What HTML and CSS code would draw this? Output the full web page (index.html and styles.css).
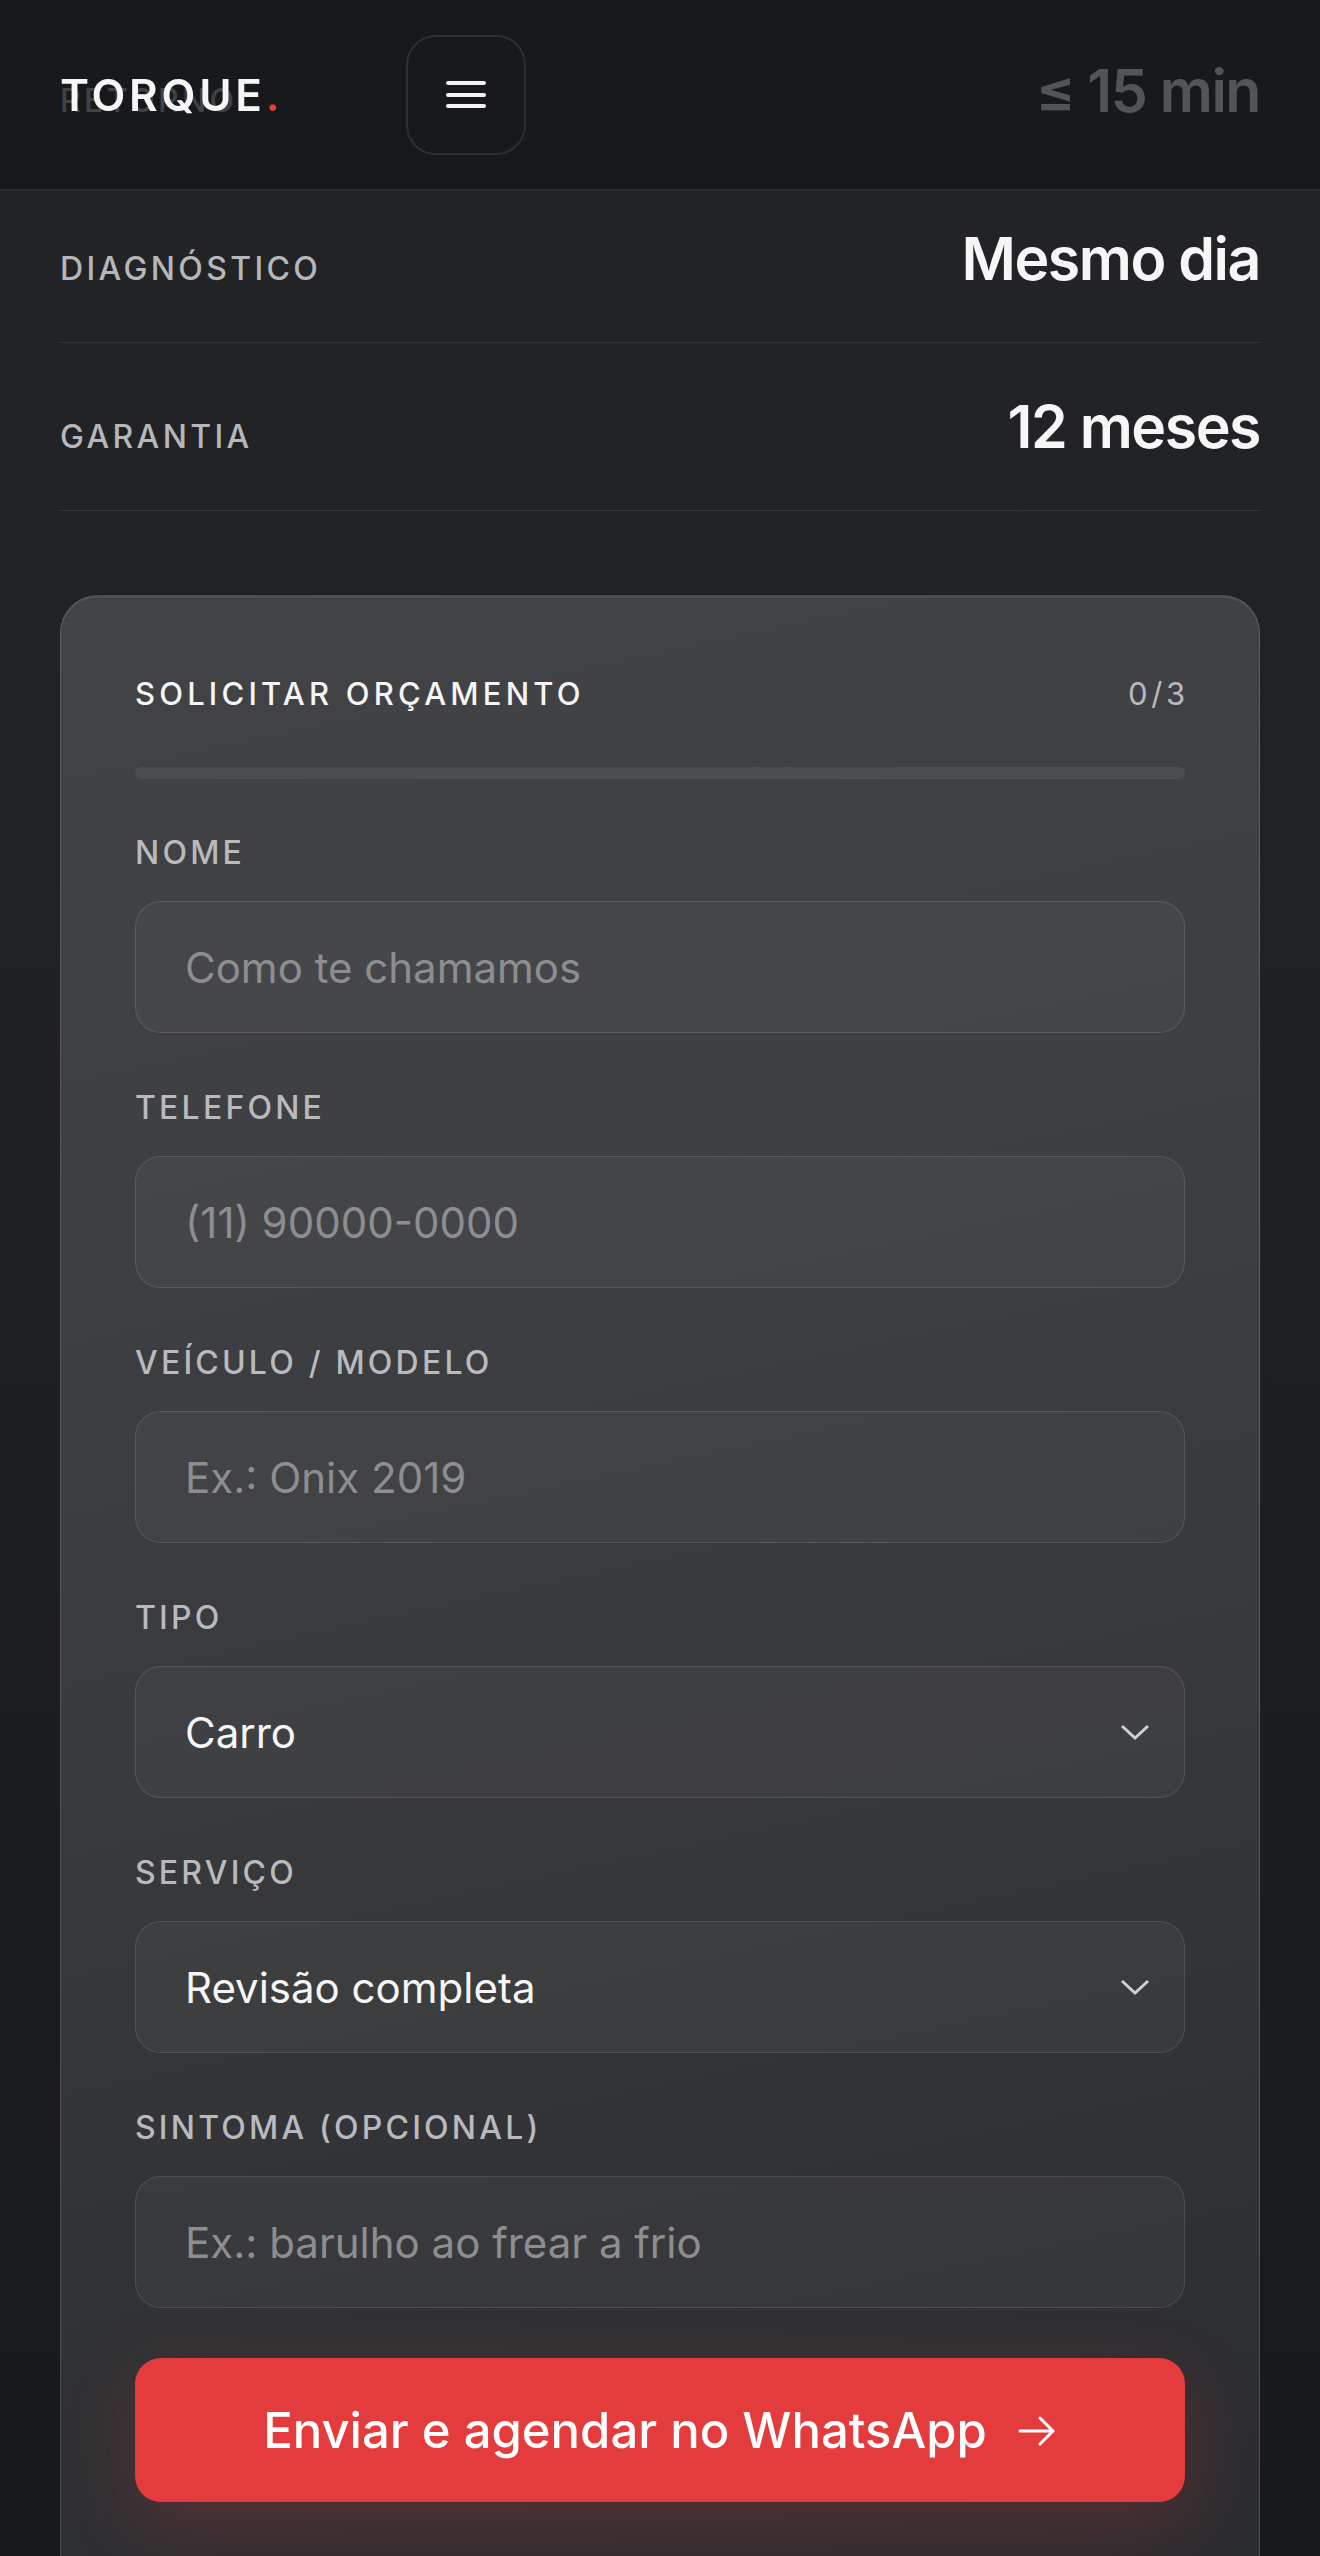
FILE: index.html
```html
<!DOCTYPE html>
<html lang="pt-BR">
<head>
<meta charset="utf-8">
<title>Torque — Solicitar orçamento</title>
<link rel="stylesheet" href="styles.css">
</head>
<body>
<header class="topbar">
  <div class="brand">TORQUE<span class="brand-dot">.</span></div>
  <button class="menu-btn" type="button" aria-label="Menu">
    <span class="menu-line"></span>
    <span class="menu-line"></span>
    <span class="menu-line"></span>
  </button>
</header>

<main class="page">
  <dl class="stats">
    <div class="stat"><dt class="stat-label">Retorno</dt><dd class="stat-value">≤ 15 min</dd></div>
    <div class="stat"><dt class="stat-label">Diagnóstico</dt><dd class="stat-value">Mesmo dia</dd></div>
    <div class="stat"><dt class="stat-label">Garantia</dt><dd class="stat-value">12 meses</dd></div>
  </dl>

  <section class="card">
    <div class="card-head">
      <h2 class="card-title">Solicitar orçamento</h2>
      <span class="card-count">0/3</span>
    </div>
    <div class="progress"><div class="progress-fill" style="width:0%"></div></div>

    <form class="fields">
      <label class="field">
        <span class="field-label">Nome</span>
        <input class="control" type="text" placeholder="Como te chamamos">
      </label>
      <label class="field">
        <span class="field-label">Telefone</span>
        <input class="control" type="tel" placeholder="(11) 90000-0000">
      </label>
      <label class="field">
        <span class="field-label">Veículo / modelo</span>
        <input class="control" type="text" placeholder="Ex.: Onix 2019">
      </label>
      <label class="field">
        <span class="field-label">Tipo</span>
        <span class="select-wrap">
          <select class="control select">
            <option>Carro</option>
            <option>Moto</option>
          </select>
          <svg class="chevron" width="30" height="17" viewBox="0 0 30 17" aria-hidden="true"><path d="M2 2 L15 14 L28 2" fill="none" stroke="#cfd0d2" stroke-width="3"/></svg>
        </span>
      </label>
      <label class="field">
        <span class="field-label">Serviço</span>
        <span class="select-wrap">
          <select class="control select">
            <option>Revisão completa</option>
            <option>Freios</option>
          </select>
          <svg class="chevron" width="30" height="17" viewBox="0 0 30 17" aria-hidden="true"><path d="M2 2 L15 14 L28 2" fill="none" stroke="#cfd0d2" stroke-width="3"/></svg>
        </span>
      </label>
      <label class="field">
        <span class="field-label">Sintoma (opcional)</span>
        <input class="control" type="text" placeholder="Ex.: barulho ao frear a frio">
      </label>

      <button class="submit" type="button">
        <span>Enviar e agendar no WhatsApp</span>
        <svg class="arrow" width="40" height="32" viewBox="0 0 40 32" aria-hidden="true"><path d="M3 16 H36 M23 3 L36 16 L23 29" fill="none" stroke="#ffffff" stroke-width="3" stroke-linecap="round" stroke-linejoin="round"/></svg>
      </button>
    </form>
    <p class="note">Resposta média em até 15 minutos.</p>
  </section>
</main>
</body>
</html>
```

FILE: styles.css
```css
* { box-sizing: border-box; }

html, body { margin: 0; padding: 0; }

body {
  font-family: Inter, "Noto Sans", "Liberation Sans", sans-serif;
  color: #f4f4f5;
  background: linear-gradient(180deg, #222427 0%, #1f2023 45%, #1a1b1e 80%, #17181a 100%);
  min-height: 2556px;
}

/* ---------- header (fixed, overlays the scrolled page) ---------- */
.topbar {
  position: fixed;
  top: 0;
  left: 0;
  right: 0;
  height: 191px;
  z-index: 10;
  display: flex;
  align-items: center;
  gap: 126px;
  padding: 0 60px;
  background: rgba(20, 21, 24, 0.72);
  border-bottom: 2px solid #2a2b2e;
}

.brand {
  font-size: 44px;
  font-weight: 600;
  letter-spacing: 0.085em;
  color: #f6f6f6;
  line-height: 1;
}

.brand-dot { color: #e33c3c; letter-spacing: 0; }

.menu-btn {
  width: 120px;
  height: 120px;
  border-radius: 30px;
  border: 2px solid #2e2f33;
  background: transparent;
  display: flex;
  flex-direction: column;
  align-items: center;
  justify-content: center;
  gap: 7.5px;
  padding: 0;
}

.menu-line {
  display: block;
  width: 40px;
  height: 4px;
  border-radius: 2px;
  background: #f2f2f2;
}

/* ---------- page ---------- */
.page {
  padding: 7px 60px 0;
}

.stats { margin: 0; }

.stat {
  display: flex;
  justify-content: space-between;
  align-items: baseline;
  padding: 52px 0 51px;
  border-bottom: 1px solid #323337;
}

.stat-label {
  font-size: 32px;
  font-weight: 500;
  letter-spacing: 0.105em;
  text-transform: uppercase;
  color: #b6b7ba;
}

.stat-value {
  margin: 0;
  font-size: 59px;
  line-height: 64px;
  font-weight: 600;
  letter-spacing: -0.025em;
  color: #f6f6f6;
}

/* ---------- card ---------- */
.card {
  margin-top: 84px;
  border-radius: 38px;
  border: 1.5px solid rgba(255, 255, 255, 0.16);
  background:
    radial-gradient(ellipse 620px 220px at 50% 2530px, rgba(200, 50, 50, 0.14), transparent 70%),
    linear-gradient(168deg, #424346 0%, #3e3f42 30%, #38393c 55%, #303134 78%, #2a2b2e 100%);
  box-shadow: inset 0 2px 0 rgba(255, 255, 255, 0.06);
  padding: 78px 74px 80px;
}

.card-head {
  display: flex;
  justify-content: space-between;
  align-items: center;
  height: 40px;
}

.card-title {
  margin: 0;
  font-size: 31px;
  line-height: 40px;
  font-weight: 500;
  letter-spacing: 0.135em;
  text-transform: uppercase;
  color: #f5f5f5;
}

.card-count {
  font-size: 31px;
  line-height: 40px;
  letter-spacing: 0.12em;
  margin-right: -4px;
  color: #b9babd;
}

.progress {
  margin-top: 53px;
  height: 12px;
  border-radius: 6px;
  background: #4b4e51;
  overflow: hidden;
}

.progress-fill {
  height: 100%;
  background: #e33c3c;
}

.fields {
  margin-top: 54px;
  display: flex;
  flex-direction: column;
  gap: 55px;
}

.field {
  display: flex;
  flex-direction: column;
  gap: 28px;
}

.field-label {
  font-size: 32px;
  line-height: 40px;
  font-weight: 500;
  letter-spacing: 0.1em;
  text-transform: uppercase;
  color: #b9babd;
}

.control {
  width: 100%;
  height: 132px;
  border-radius: 26px;
  border: 1.5px solid rgba(255, 255, 255, 0.11);
  background: rgba(255, 255, 255, 0.035);
  padding: 0 49px;
  font-family: Inter, "Noto Sans", "Liberation Sans", sans-serif;
  font-size: 42px;
  color: #f6f6f6;
  outline: none;
}

.control::placeholder { color: #8c8e91; }

.select-wrap {
  position: relative;
  display: block;
}

.select {
  appearance: none;
  -webkit-appearance: none;
}

.chevron {
  position: absolute;
  right: 35px;
  top: 58px;
  pointer-events: none;
}

.submit {
  margin-top: -5px;
  height: 144px;
  border: none;
  border-radius: 26px;
  background: #e43c3c;
  color: #ffffff;
  font-family: Inter, "Noto Sans", "Liberation Sans", sans-serif;
  font-size: 49px;
  font-weight: 500;
  display: flex;
  align-items: center;
  justify-content: center;
  gap: 30px;
  box-shadow: 0 24px 70px rgba(228, 60, 60, 0.22);
}

.arrow { margin-top: 2px; }

.note {
  margin: 56px 0 0;
  text-align: center;
  font-size: 26px;
  color: #8c8e91;
}
```
